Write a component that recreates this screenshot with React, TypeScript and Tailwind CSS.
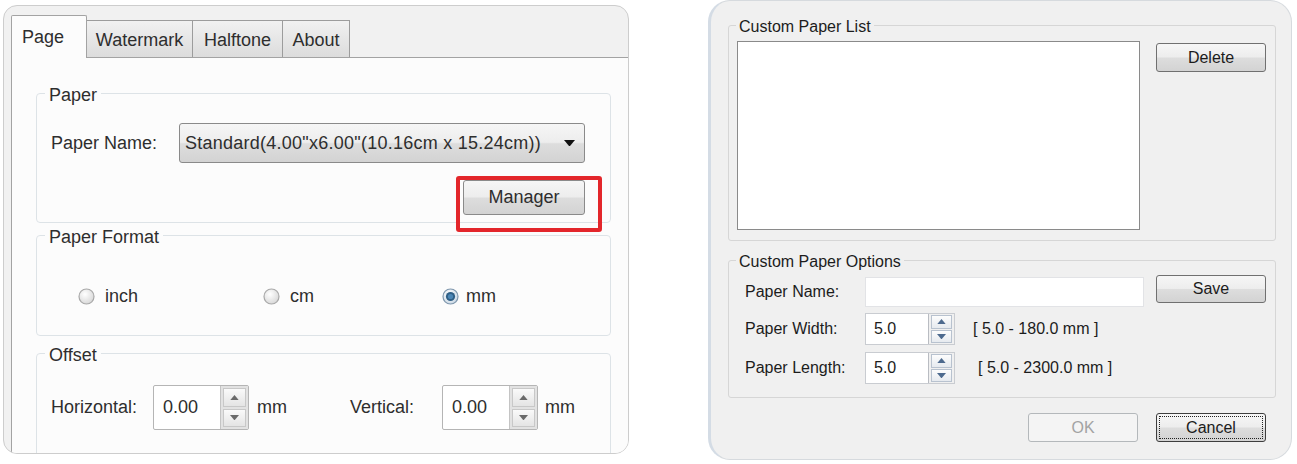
import React from "react";

const btnBg =
  "bg-[linear-gradient(to_bottom,#f6f6f6_0%,#ededed_48%,#dddddd_52%,#d3d3d3_100%)]";

function Tri({ up, size = 8, color = "#4a5a70" }: { up?: boolean; size?: number; color?: string }) {
  return (
    <svg width={size} height={size * 0.6} viewBox="0 0 10 6">
      {up ? <path d="M0 6 L5 0 L10 6 Z" fill={color} /> : <path d="M0 0 L10 0 L5 6 Z" fill={color} />}
    </svg>
  );
}

function Radio({ checked }: { checked?: boolean }) {
  return (
    <svg width="17" height="17" viewBox="0 0 17 17">
      <defs>
        <radialGradient id={checked ? "rgc" : "rgu"} cx="40%" cy="35%" r="70%">
          <stop offset="0%" stopColor="#ffffff" />
          <stop offset="100%" stopColor={checked ? "#c9d7e4" : "#d6d6d6"} />
        </radialGradient>
      </defs>
      <circle cx="8.5" cy="8.5" r="7.5" fill={`url(#${checked ? "rgc" : "rgu"})`} stroke={checked ? "#7f97ad" : "#a9a9a9"} strokeWidth="1.2" />
      {checked && (
        <>
          <circle cx="8.5" cy="8.5" r="4.6" fill="#2f5f86" />
          <circle cx="8.5" cy="8.5" r="2.6" fill="#4c87b6" />
        </>
      )}
    </svg>
  );
}

function LeftSpin({ value }: { value: string }) {
  return (
    <div className="flex w-[96px] h-[45px] border border-[#b5b5b5] bg-white rounded-[2px]">
      <div className="flex-1 flex items-center pl-[9px]">{value}</div>
      <div className="w-[28px] flex flex-col bg-[#e2e2e2] border-l border-[#c4c4c4] p-[2px] gap-[2px]">
        <div className="flex-1 flex items-center justify-center bg-[linear-gradient(to_bottom,#fafafa,#e4e4e4)] border border-[#c8c8c8]">
          <Tri up size={9} color="#6a6a6a" />
        </div>
        <div className="flex-1 flex items-center justify-center bg-[linear-gradient(to_bottom,#fafafa,#e4e4e4)] border border-[#c8c8c8]">
          <Tri size={9} color="#6a6a6a" />
        </div>
      </div>
    </div>
  );
}

function RightSpin({ value }: { value: string }) {
  return (
    <div className="flex w-[90px] h-[32px] border border-[#c9ccd1] bg-white">
      <div className="flex-1 flex items-center pl-[8px]">{value}</div>
      <div className="w-[26px] flex flex-col border-l border-[#b9bcc2] bg-[#f0f0f0] px-[2px] py-[1px] gap-[1px]">
        <div className="flex-1 flex items-center justify-center border border-[#b8c2cf] bg-[linear-gradient(to_bottom,#fdfdfd,#e6eaef)]">
          <Tri up size={9} color="#4d6a8e" />
        </div>
        <div className="flex-1 flex items-center justify-center border border-[#b8c2cf] bg-[linear-gradient(to_bottom,#fdfdfd,#e6eaef)]">
          <Tri size={9} color="#4d6a8e" />
        </div>
      </div>
    </div>
  );
}

function LeftGroup({ title, className, children }: { title: string; className: string; children?: React.ReactNode }) {
  return (
    <div className={`relative w-[575px] shrink-0 border border-[#dde3e7] rounded-[4px] ${className}`}>
      <span className="absolute left-[8px] -top-[10px] px-[4px] bg-[#fcfcfc] leading-[22px]">{title}</span>
      {children}
    </div>
  );
}

function RightGroup({ title, className, children }: { title: string; className: string; children?: React.ReactNode }) {
  return (
    <div className={`relative w-[548px] shrink-0 border border-[#d6d6d6] rounded-[3px] ${className}`}>
      <span className="absolute left-[7px] -top-[9px] px-[3px] bg-[#f0f0f0] leading-[20px]">{title}</span>
      {children}
    </div>
  );
}

export default function App() {
  return (
    <div
      className="w-[1297px] h-[464px] bg-white flex items-start"
      style={{ fontFamily: '"Liberation Sans", Arial, sans-serif' }}
    >
      {/* Left panel */}
      <div className="ml-[3px] mt-[5px] w-[626px] h-[449px] rounded-[14px] border border-[#cdcdcd] bg-[#f1f1f1] overflow-hidden flex flex-col text-[18px] text-[#2e2e2e]">
        <div className="h-[51px] shrink-0 flex items-end pl-[7px]">
          <div className="relative z-10 -mb-px w-[76px] h-[43px] bg-[#fcfcfc] border-t border-l border-r border-[#a3a3a3] rounded-t-[2px] flex items-start pt-[8px] pl-[10px]">
            Page
          </div>
          <div className="w-[106px] h-[37px] border-t border-r border-[#9c9c9c] bg-[linear-gradient(to_bottom,#f1f1f1,#dcdcdc)] flex items-center justify-center pt-[3px]">
            Watermark
          </div>
          <div className="w-[90px] h-[37px] border-t border-r border-[#9c9c9c] bg-[linear-gradient(to_bottom,#f1f1f1,#dcdcdc)] flex items-center justify-center pt-[3px]">
            Halftone
          </div>
          <div className="w-[67px] h-[37px] border-t border-r border-[#9c9c9c] bg-[linear-gradient(to_bottom,#f1f1f1,#dcdcdc)] flex items-center justify-center pt-[3px]">
            About
          </div>
        </div>
        <div className="flex-1 ml-[7px] border-t border-l border-[#a3a3a3] bg-[#fcfcfc] pt-[35px] pl-[24px] flex flex-col">
          <LeftGroup title="Paper" className="h-[130px] pt-[29px] pl-[14px]">
            <div className="flex items-center">
              <span className="w-[128px]">Paper Name:</span>
              <div className={`w-[406px] h-[40px] rounded-[3px] border border-[#8a8a8a] ${btnBg} flex items-center pl-[5px] pr-[9px]`}>
                <span className="flex-1 tracking-[0.25px]">Standard(4.00"x6.00"(10.16cm x 15.24cm))</span>
                <Tri size={11} color="#111" />
              </div>
            </div>
            <div className="w-[534px] flex justify-end mt-[17px]">
              <div className={`w-[122px] h-[35px] rounded-[3px] border border-[#8a8a8a] ${btnBg} flex items-center justify-center`}>
                Manager
              </div>
            </div>
            <div className="absolute left-[419px] top-[82px] w-[146px] h-[56px] border-[4px] border-[#e3262b] rounded-[3px]" />
          </LeftGroup>
          <LeftGroup title="Paper Format" className="mt-[12px] h-[101px] pt-[50px] pl-[41px]">
            <div className="flex items-center h-[20px]">
              <div className="w-[185px] flex items-center gap-[10px]">
                <Radio />
                <span>inch</span>
              </div>
              <div className="w-[179px] flex items-center gap-[10px]">
                <Radio />
                <span>cm</span>
              </div>
              <div className="flex items-center gap-[7px]">
                <Radio checked />
                <span>mm</span>
              </div>
            </div>
          </LeftGroup>
          <LeftGroup title="Offset" className="mt-[17px] h-[140px] pt-[31px] pl-[14px]">
            <div className="flex items-center">
              <span className="w-[102px]">Horizontal:</span>
              <LeftSpin value="0.00" />
              <span className="ml-[8px] w-[93px]">mm</span>
              <span className="w-[92px]">Vertical:</span>
              <LeftSpin value="0.00" />
              <span className="ml-[7px]">mm</span>
            </div>
          </LeftGroup>
        </div>
      </div>

      {/* Right panel */}
      <div className="ml-[79px] w-[584px] h-[460px] rounded-[22px] border border-[#d6dade] border-l-[3px] border-l-[#d4dce5] bg-[#f0f0f0] pt-[24px] pl-[17px] flex flex-col text-[16px] text-[#1c1c1c]">
        <RightGroup title="Custom Paper List" className="h-[216px] pt-[15px] pl-[8px]">
          <div className="flex items-start">
            <div className="w-[403px] h-[189px] bg-white border border-[#8a8a8a]" />
            <div className={`ml-[16px] mt-[2px] w-[110px] h-[29px] rounded-[3px] border border-[#707070] ${btnBg} flex items-center justify-center`}>
              Delete
            </div>
          </div>
        </RightGroup>
        <RightGroup title="Custom Paper Options" className="mt-[19px] h-[138px] pt-[14px] pl-[16px]">
          <div className="flex items-start">
            <span className="w-[120px] h-[30px] mt-[2px] flex items-center">Paper Name:</span>
            <div className="w-[279px] h-[30px] mt-[2px] bg-white border border-[#e2e3e6]" />
            <div className={`ml-[12px] w-[110px] h-[28px] rounded-[3px] border border-[#707070] ${btnBg} flex items-center justify-center`}>
              Save
            </div>
          </div>
          <div className="flex items-center mt-[6px]">
            <span className="w-[120px]">Paper Width:</span>
            <RightSpin value="5.0" />
            <span className="ml-[18px]">[ 5.0 - 180.0 mm ]</span>
          </div>
          <div className="flex items-center mt-[7px]">
            <span className="w-[120px]">Paper Length:</span>
            <RightSpin value="5.0" />
            <span className="ml-[23px]">[ 5.0 - 2300.0 mm ]</span>
          </div>
        </RightGroup>
        <div className="w-[548px] flex justify-end gap-[18px] pr-[10px] mt-[15px]">
          <div className="w-[110px] h-[29px] rounded-[3px] border border-[#b4b8bb] bg-[#f4f4f4] text-[#a3a3a3] flex items-center justify-center">
            OK
          </div>
          <div className={`w-[110px] h-[29px] rounded-[3px] border border-[#3d3d3d] ${btnBg} flex items-center justify-center outline-1 outline-dotted outline-[#222] -outline-offset-4`}>
            Cancel
          </div>
        </div>
      </div>
    </div>
  );
}
